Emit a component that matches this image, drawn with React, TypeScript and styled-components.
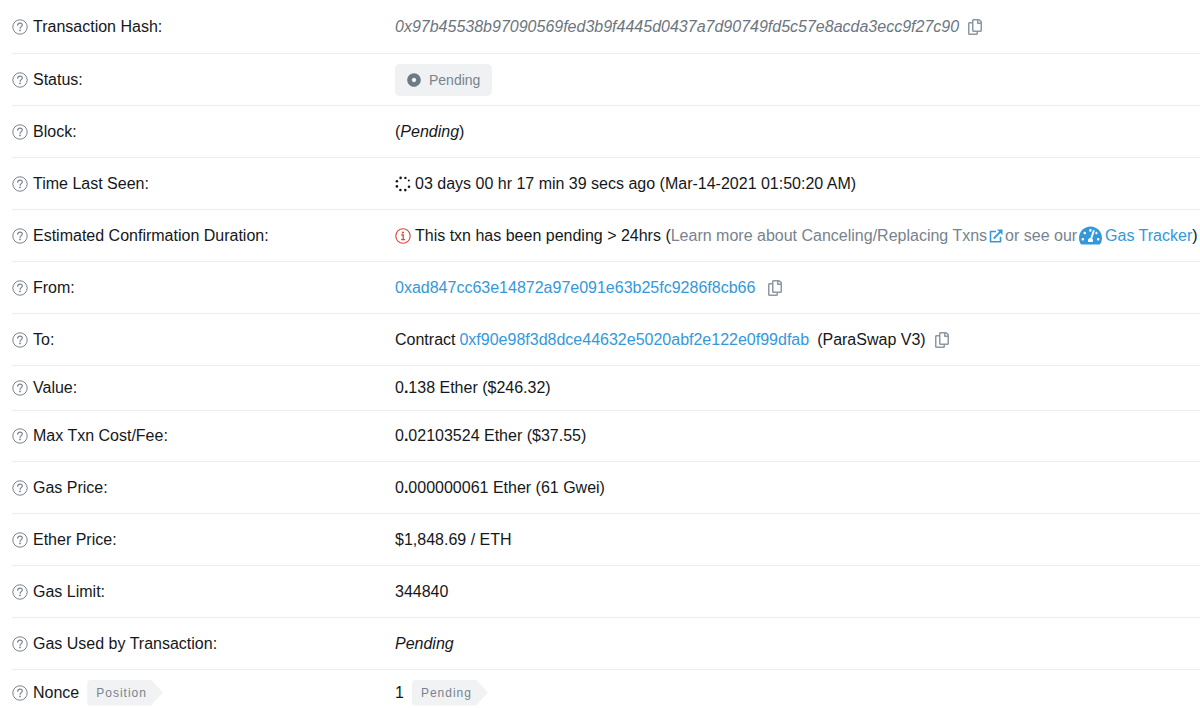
import React, { ReactNode } from "react";
import styled, { createGlobalStyle } from "styled-components";
import { FaDotCircle, FaRegCopy, FaTachometerAlt } from "react-icons/fa";

const GlobalStyle = createGlobalStyle`
  * { box-sizing: border-box; }
  body {
    margin: 0;
    background: #fff;
    color: #14181c;
    font: 16px/24px "Liberation Sans", Arial, sans-serif;
  }
`;

const Details = styled.dl`
  margin: 0;
  padding: 0 0 0 12px;
  overflow: hidden;
`;

const Row = styled.div<{ $height?: number }>`
  display: grid;
  grid-template-columns: minmax(260px, 383px) minmax(0, 1fr);
  align-items: center;
  min-height: ${(p) => p.$height ?? 52}px;
  border-bottom: 1px solid #eaecef;
  &:last-child { border-bottom: 0; }
`;

const Label = styled.dt`
  display: flex;
  align-items: center;
  gap: 5px;
`;

const Value = styled.dd`
  display: flex;
  align-items: center;
  margin: 0;
  white-space: nowrap;
`;

const Inline = styled.span<{ $gap?: number }>`
  display: inline-flex;
  align-items: center;
  gap: ${(p) => p.$gap ?? 4}px;
`;

const Hash = styled.em`
  color: #6c757e;
`;

const Muted = styled.span`
  display: inline-flex;
  align-items: center;
  gap: 2px;
  color: #77838f;
`;

const Link = styled.a`
  display: inline-flex;
  align-items: center;
  gap: 3px;
  color: #3498db;
  text-decoration: none;
`;

const CopyButton = styled.button`
  display: inline-flex;
  padding: 0;
  border: 0;
  background: none;
  color: #8c98a4;
  font-size: 16px;
  cursor: pointer;
`;

const StatusBadge = styled.span`
  display: inline-flex;
  align-items: center;
  gap: 8px;
  height: 32px;
  padding: 0 12px;
  border-radius: 5px;
  background: #f0f1f3;
  color: #77838f;
  font-size: 14px;
  svg { color: #6c7a87; }
`;

const Tag = styled.span`
  display: inline-flex;
  align-items: center;
  height: 26px;
  padding: 0 16px 0 9px;
  border-radius: 4px 0 0 4px;
  background: #f0f2f4;
  clip-path: polygon(0 0, calc(100% - 12px) 0, 100% 50%, calc(100% - 12px) 100%, 0 100%);
  color: #77838f;
  font-size: 12px;
  letter-spacing: 1px;
`;

const Icon = styled.svg`
  flex: none;
  fill: none;
  stroke: currentColor;
`;

const HelpButton = styled.button`
  display: inline-flex;
  padding: 0;
  border: 0;
  background: none;
  color: #77838f;
`;

const Help = () => (
  <HelpButton type="button" aria-label="Help">
    <Icon width="16" height="16" viewBox="0 0 16 16">
      <circle cx="8" cy="8" r="7.2" strokeWidth="1" />
      <path d="M5.7 6.2C5.8 4.900 6.800 4.100 8 4.100c1.300 0 2.300.8 2.300 1.900 0 1.600-2.200 1.700-2.200 3.300" strokeWidth="1.200" strokeLinecap="round" />
      <circle cx="8.050" cy="11.400" r=".85" fill="currentColor" stroke="none" />
    </Icon>
  </HelpButton>
);

const InfoIcon = () => (
  <Icon width="16" height="16" viewBox="0 0 16 16" color="#de4437" aria-hidden>
    <circle cx="8" cy="8" r="7.200" strokeWidth="1.100" />
    <path d="M6.300 7h1.900v4.300M6.100 11.600h3.900" strokeWidth="1.300" />
    <circle cx="7.900" cy="4.600" r="1.100" fill="currentColor" stroke="none" />
  </Icon>
);

const SpinnerIcon = () => (
  <Icon width="16" height="16" viewBox="0 0 16 16" aria-hidden>
    <g fill="currentColor" stroke="none">
      <circle cx="5.600" cy="1.900" r="1.300" />
      <circle cx="10.400" cy="1.900" r="1.200" />
      <circle cx="1.900" cy="5.300" r="1.300" />
      <circle cx="1.900" cy="10.400" r="1.300" />
      <circle cx="5.400" cy="14" r="1.300" />
      <circle cx="10.300" cy="14.100" r="1.300" />
      <circle cx="14" cy="10.800" r="1.300" />
      <circle cx="13.800" cy="4.500" r="1" />
    </g>
  </Icon>
);

const ExternalIcon = () => (
  <Icon width="14" height="14" viewBox="0 0 14 14" color="#3498db" aria-hidden>
    <path d="M7 2.500H1.500v10.200h10V7.700" strokeWidth="1.600" strokeLinejoin="round" />
    <path d="M4.800 9.500l6.700-6.800" strokeWidth="1.800" />
    <path d="M8 .5h5.500v5.500z" fill="currentColor" stroke="none" />
  </Icon>
);

const Copy = () => (
  <CopyButton type="button" aria-label="Copy to clipboard">
    <FaRegCopy />
  </CopyButton>
);

interface ItemProps {
  label: string;
  tag?: string;
  height?: number;
  children: ReactNode;
}

const Item = ({ label, tag, height, children }: ItemProps) => (
  <Row $height={height}>
    <Label>
      <Help />
      <Inline $gap={8}>
        {label}
        {tag && <Tag>{tag}</Tag>}
      </Inline>
    </Label>
    <Value>{children}</Value>
  </Row>
);

export default function App() {
  return (
    <>
      <GlobalStyle />
      <Details>
        <Item label="Transaction Hash:" height={54}>
          <Inline $gap={8}>
            <Hash>0x97b45538b97090569fed3b9f4445d0437a7d90749fd5c57e8acda3ecc9f27c90</Hash>
            <Copy />
          </Inline>
        </Item>
        <Item label="Status:">
          <StatusBadge><FaDotCircle />Pending</StatusBadge>
        </Item>
        <Item label="Block:"><span>(<em>Pending</em>)</span></Item>
        <Item label="Time Last Seen:">
          <Inline><SpinnerIcon />03 days 00 hr 17 min 39 secs ago (Mar-14-2021 01:50:20 AM)</Inline>
        </Item>
        <Item label="Estimated Confirmation Duration:">
          <Inline>
            <InfoIcon />
            <span>This txn has been pending &gt; 24hrs (</span>
          </Inline>
          <Muted>
            <span>Learn more about Canceling/Replacing Txns</span>
            <Link href="#cancel" aria-label="Learn more"><ExternalIcon /></Link>
            <span>or see our</span>
            <Link href="#gastracker"><FaTachometerAlt size={23} />Gas Tracker</Link>
          </Muted>
          <span>)</span>
        </Item>
        <Item label="From:">
          <Inline $gap={12}>
            <Link href="#from">0xad847cc63e14872a97e091e63b25fc9286f8cb66</Link>
            <Copy />
          </Inline>
        </Item>
        <Item label="To:">
          <Inline $gap={8}>
            <Inline>
              Contract
              <Link href="#to">0xf90e98f3d8dce44632e5020abf2e122e0f99dfab</Link>
            </Inline>
            <span>(ParaSwap V3)</span>
            <Copy />
          </Inline>
        </Item>
        <Item label="Value:" height={45}><span>0<b>.</b>138 Ether ($246.32)</span></Item>
        <Item label="Max Txn Cost/Fee:" height={51}><span>0<b>.</b>02103524 Ether ($37.55)</span></Item>
        <Item label="Gas Price:"><span>0<b>.</b>000000061 Ether (61 Gwei)</span></Item>
        <Item label="Ether Price:">$1,848.69 / ETH</Item>
        <Item label="Gas Limit:">344840</Item>
        <Item label="Gas Used by Transaction:"><em>Pending</em></Item>
        <Item label="Nonce" tag="Position" height={45}>
          <Inline $gap={8}>1<Tag>Pending</Tag></Inline>
        </Item>
      </Details>
    </>
  );
}
